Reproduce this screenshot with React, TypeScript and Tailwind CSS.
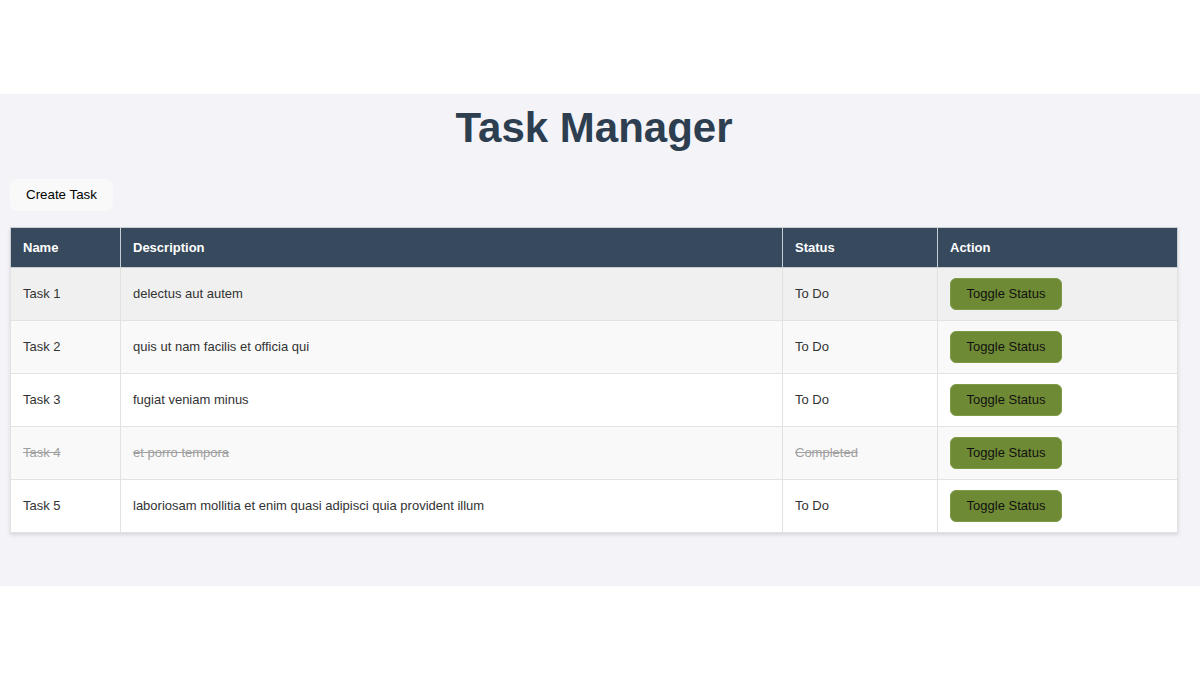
import React from 'react';

interface Task {
  id: number;
  name: string;
  description: string;
  completed: boolean;
}

const tasks: Task[] = [
  { id: 1, name: 'Task 1', description: 'delectus aut autem', completed: false },
  { id: 2, name: 'Task 2', description: 'quis ut nam facilis et officia qui', completed: false },
  { id: 3, name: 'Task 3', description: 'fugiat veniam minus', completed: false },
  { id: 4, name: 'Task 4', description: 'et porro tempora', completed: true },
  { id: 5, name: 'Task 5', description: 'laboriosam mollitia et enim quasi adipisci quia provident illum', completed: false },
];

const rowBg = ['bg-[#f0f0f0]', 'bg-[#f9f9f9]', 'bg-white', 'bg-[#f9f9f9]', 'bg-white'];

export default function App() {
  return (
    <div className="w-[1200px] h-[680px] pt-[94px] bg-white font-['Liberation_Sans',Arial,sans-serif]">
      <div className="h-[492px] bg-[#f3f3f8] pt-[13px] px-[10px]">
        <h1 className="w-[1168px] text-center text-[42px] leading-[41px] font-bold text-[#2c3e50]">Task Manager</h1>

        <button className="mt-[31px] h-[32px] px-[16px] rounded-[8px] bg-[#f9f9f9] text-[13.33px] text-black">
          Create Task
        </button>

        {/* Task table */}
        <table className="mt-[16px] w-[1168px] border-collapse text-[13px] text-[#333] shadow-[0_2px_4px_rgba(0,0,0,0.12)]">
          <thead>
            <tr className="bg-[#36495d] text-white text-left">
              <th className="w-[110px] px-[12px] py-[12px] leading-[15px] font-bold border border-[#c8ced4]">Name</th>
              <th className="w-[662px] px-[12px] py-[12px] leading-[15px] font-bold border border-[#c8ced4]">Description</th>
              <th className="w-[155px] px-[12px] py-[12px] leading-[15px] font-bold border border-[#c8ced4]">Status</th>
              <th className="px-[12px] py-[12px] leading-[15px] font-bold border border-[#c8ced4]">Action</th>
            </tr>
          </thead>
          <tbody>
            {tasks.map((t, i) => {
              const done = t.completed ? 'line-through text-[#a0a0a0]' : '';
              return (
                <tr key={t.id} className={rowBg[i]}>
                  <td className={`px-[12px] py-[10px] border border-[#e2e2e2] ${done}`}>{t.name}</td>
                  <td className={`px-[12px] py-[10px] border border-[#e2e2e2] ${done}`}>{t.description}</td>
                  <td className={`px-[12px] py-[10px] border border-[#e2e2e2] ${done}`}>{t.completed ? 'Completed' : 'To Do'}</td>
                  <td className="px-[12px] py-[10px] border border-[#e2e2e2]">
                    <button className="h-[32px] w-[112px] rounded-[6px] bg-[#6f8a35] text-[13px] text-[#111] border border-[#7f9a45]">
                      Toggle Status
                    </button>
                  </td>
                </tr>
              );
            })}
          </tbody>
        </table>
      </div>
    </div>
  );
}
